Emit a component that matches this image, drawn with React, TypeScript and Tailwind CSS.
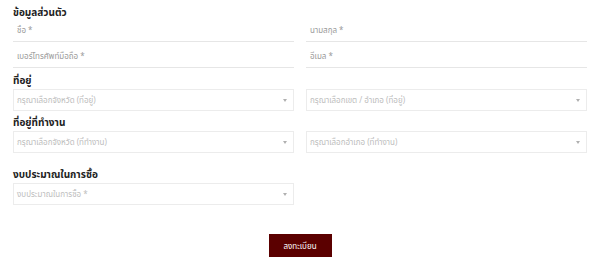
import React from "react";

const font = { fontFamily: '"Noto Sans", "Noto Sans Thai", "Noto Sans CJK SC", sans-serif' };

function Line({ label }: { label: string }) {
  return (
    <div className="h-[26px] flex items-end border-b border-[#e6e6e6] pb-[7px] pl-[4px]">
      <span className="text-[8px] text-[#9a9a9a] leading-none">{label}</span>
    </div>
  );
}

function Select({ label }: { label: string }) {
  return (
    <div className="h-[22px] flex items-center justify-between border border-[#ececec] pl-[3px] pr-[6px]">
      <span className="text-[8px] text-[#bdbdbd] leading-none">{label}</span>
      <span className="w-0 h-0 border-l-[2px] border-r-[2px] border-t-[3px] border-l-transparent border-r-transparent border-t-[#b0b0b0]" />
    </div>
  );
}

function Heading({ children }: { children: React.ReactNode }) {
  return <div className="text-[10px] font-bold text-[#222] leading-none">{children}</div>;
}

export default function App() {
  return (
    <div className="w-[600px] h-[273px] bg-white px-[13px] pt-[7px]" style={font}>
      <div className="h-[9px] flex items-center">
        <Heading>ข้อมูลส่วนตัว</Heading>
      </div>
      <div className="grid grid-cols-2 gap-x-[12px]">
        <Line label="ชื่อ *" />
        <Line label="นามสกุล *" />
        <Line label="เบอร์โทรศัพท์มือถือ *" />
        <Line label="อีเมล *" />
      </div>
      <div className="h-[21px] flex items-center pt-[2px]">
        <Heading>ที่อยู่</Heading>
      </div>
      <div className="grid grid-cols-2 gap-x-[12px]">
        <Select label="กรุณาเลือกจังหวัด (ที่อยู่)" />
        <Select label="กรุณาเลือกเขต / อำเภอ (ที่อยู่)" />
      </div>
      <div className="h-[20px] flex items-center pt-[2px]">
        <Heading>ที่อยู่ที่ทำงาน</Heading>
      </div>
      <div className="grid grid-cols-2 gap-x-[12px]">
        <Select label="กรุณาเลือกจังหวัด (ที่ทำงาน)" />
        <Select label="กรุณาเลือกอำเภอ (ที่ทำงาน)" />
      </div>
      <div className="h-[30px] flex items-end pb-[4px]">
        <Heading>งบประมาณในการซื้อ</Heading>
      </div>
      <div className="grid grid-cols-2 gap-x-[12px]">
        <Select label="งบประมาณในการซื้อ *" />
      </div>
      <div className="flex justify-center pt-[29px]">
        <button className="w-[63px] h-[23px] bg-[#5b0000] text-white text-[8px] flex items-center justify-center">
          ลงทะเบียน
        </button>
      </div>
    </div>
  );
}
